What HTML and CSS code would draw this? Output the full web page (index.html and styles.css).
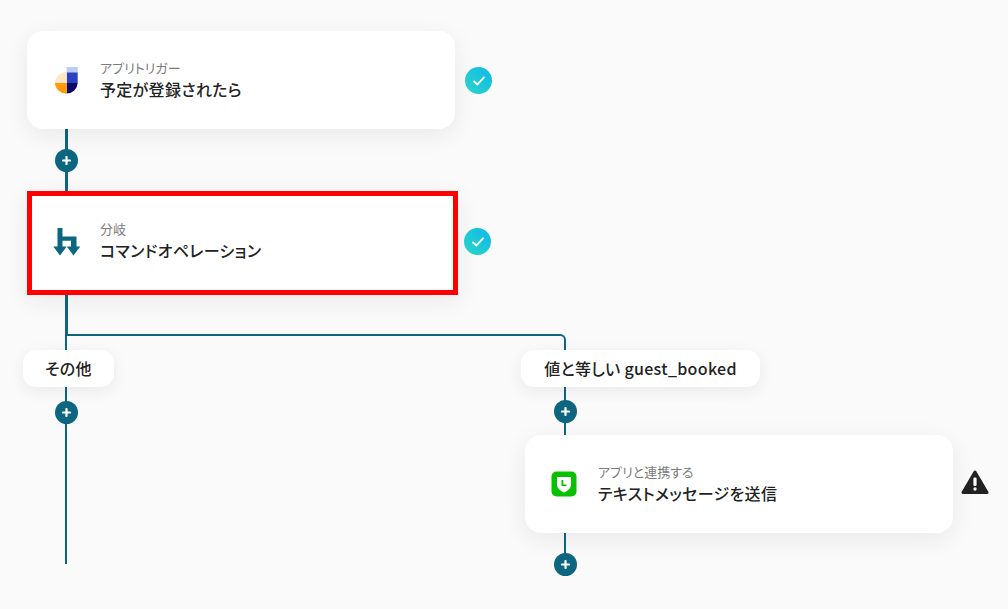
FILE: index.html
```html
<!DOCTYPE html>
<html lang="ja">
<head>
  <meta charset="UTF-8" />
  <title>フローボット</title>
  <link rel="stylesheet" href="styles.css">
</head>
<body>

<div class="flow">
  <svg class="lines" width="1008" height="609" viewBox="0 0 1008 609" fill="none">
    <path class="thick" d="M66.500 125V335" />
    <path d="M66 335V564" />
    <path d="M66 335H560a5 5 0 0 1 5 5V355" />
    <path d="M565 385V440" />
    <path d="M565 530V565" />
  </svg>

  <div class="card card-trigger">
    <svg class="icon" width="24" height="28" viewBox="0 0 24 28">
      <rect x="12.700" y="1" width="11" height="6" fill="#bccbf7" />
      <path d="M12.700 6.500H23.700V17H12.700Z" fill="#2b41bf" />
      <path d="M12.700 17H23.700A11 11 0 0 1 12.700 27.500Z" fill="#0b0b66" />
      <path d="M12.700 17H1A11 11 0 0 0 12.700 27.500Z" fill="#ff9a0a" />
      <path d="M12.700 6V17H1A11 11 0 0 1 12.700 6Z" fill="#fde7c4" />
    </svg>
    <div class="text">
      <p class="label">アプリトリガー</p>
      <p class="title">予定が登録されたら</p>
    </div>
  </div>

  <div class="card card-branch">
    <svg class="icon" width="27" height="28" viewBox="0 0 27 28" fill="#0d6680">
      <path d="M4.500 0H9.500V8.500H23.500V20H18V12.800H9.500V20H4.500Z" />
      <path d="M0.500 18.500H13Q13.800 18.500 13.200 19.300L7 27.500L0.800 19.300Q0 18.500 0.500 18.500Z" />
      <path d="M14.500 18.500H26.500Q27.200 18.500 26.700 19.300L20.500 27.500L14.300 19.300Q13.800 18.500 14.500 18.500Z" />
    </svg>
    <div class="text">
      <p class="label">分岐</p>
      <p class="title">コマンドオペレーション</p>
    </div>
  </div>

  <div class="card card-line">
    <svg class="icon" width="26" height="26" viewBox="0 0 26 26">
      <rect width="25" height="25" x="0.500" y="0.500" rx="5" fill="#06c100" />
      <path d="M6 6H20V14C20 17.500 16 20 13 21.500C10 20 6 17.500 6 14Z" fill="#fff" />
      <path d="M10.500 9V15H15.500V13.500H12.300V9Z" fill="#06c100" />
    </svg>
    <div class="text">
      <p class="label">アプリと連携する</p>
      <p class="title">テキストメッセージを送信</p>
    </div>
  </div>

  <div class="pill pill-other">その他</div>
  <div class="pill pill-value">値と等しい guest_booked</div>

  <span class="plus plus-a"><svg width="9" height="9" viewBox="0 0 9 9"><path d="M4.500 1V8M1 4.500H8" /></svg></span>
  <span class="plus plus-b"><svg width="9" height="9" viewBox="0 0 9 9"><path d="M4.500 1V8M1 4.500H8" /></svg></span>
  <span class="plus plus-c"><svg width="9" height="9" viewBox="0 0 9 9"><path d="M4.500 1V8M1 4.500H8" /></svg></span>
  <span class="plus plus-d"><svg width="9" height="9" viewBox="0 0 9 9"><path d="M4.500 1V8M1 4.500H8" /></svg></span>

  <span class="check check-a">
    <svg width="14" height="12" viewBox="0 0 14 12" fill="none"><path d="M1.500 6L5.300 9.500L12.500 1.800" /></svg>
  </span>
  <span class="check check-b">
    <svg width="14" height="12" viewBox="0 0 14 12" fill="none"><path d="M1.500 6L5.300 9.500L12.500 1.800" /></svg>
  </span>

  <svg class="warn" width="28" height="25" viewBox="0 0 28 25">
    <path d="M14 2L26 22.500H2Z" fill="#222" stroke="#222" stroke-width="3" stroke-linejoin="round" />
    <rect x="12.400" y="7.500" width="3.200" height="8.500" rx="1.300" fill="#fff" />
    <circle cx="14" cy="19" r="1.700" fill="#fff" />
  </svg>
</div>

</body>
</html>
```

FILE: styles.css
```css
* { box-sizing: border-box; }
html, body { margin: 0; padding: 0; }
body { background: #fafafa; font-family: "Noto Sans CJK JP", "Noto Sans", sans-serif; font-feature-settings: "palt"; color: #222; overflow: hidden; }
p { margin: 0; }

.flow { position: relative; width: 1008px; height: 609px; overflow: hidden; }
.lines { position: absolute; left: 0; top: 0; }
.lines path { stroke: #0d6680; stroke-width: 2; }
.lines .thick { stroke-width: 3; }

/* nodes */
.card { position: absolute; width: 428px; height: 98px; display: flex; align-items: center; background: #fff; border-radius: 16px; box-shadow: 0 6px 24px rgba(0,0,0,0.07); }
.card-trigger { left: 27px; top: 31px; padding-left: 27px; }
.card-branch { left: 27px; top: 191px; width: 431px; height: 104px; padding-left: 21px; padding-bottom: 5px; border: 5px solid #f00; border-radius: 0; }
.card-branch .icon { margin-top: 2px; }
.card-line { left: 525px; top: 435px; padding-left: 26px; }
.card-trigger .text { margin-left: 22px; }
.card-branch .text { margin-left: 20px; }
.card-line .text { margin-left: 21px; }
.label { font-size: 13px; line-height: 18px; color: #7b7b7b; }
.title { font-size: 16px; line-height: 24px; font-weight: 500; letter-spacing: 0.02em; color: #222; }
.icon { flex: none; display: block; }

.pill { position: absolute; top: 350px; height: 37px; padding-bottom: 2px; display: flex; align-items: center; justify-content: center; background: #fff; border-radius: 13px; font-size: 16px; font-weight: 500; letter-spacing: 0.02em; box-shadow: 0 4px 16px rgba(0,0,0,0.07); }
.pill-other { left: 23px; width: 91px; }
.pill-value { left: 521px; width: 239px; }

.plus { position: absolute; width: 23px; height: 23px; display: flex; align-items: center; justify-content: center; border-radius: 50%; background: #0d6680; }
.plus path { stroke: #fff; stroke-width: 2.2; stroke-linecap: round; fill: none; }
.plus-a { left: 55px; top: 149px; }
.plus-b { left: 55px; top: 401px; }
.plus-c { left: 554px; top: 400px; }
.plus-d { left: 554px; top: 553px; }

.check { position: absolute; width: 27px; height: 27px; display: flex; align-items: center; justify-content: center; border-radius: 50%; background: linear-gradient(45deg, #2ad6c4, #10b8ec); }
.check path { stroke: #fff; stroke-width: 1.8; }
.check-a { left: 465px; top: 67px; }
.check-b { left: 464px; top: 228px; }

.warn { position: absolute; left: 961px; top: 470px; }
```
